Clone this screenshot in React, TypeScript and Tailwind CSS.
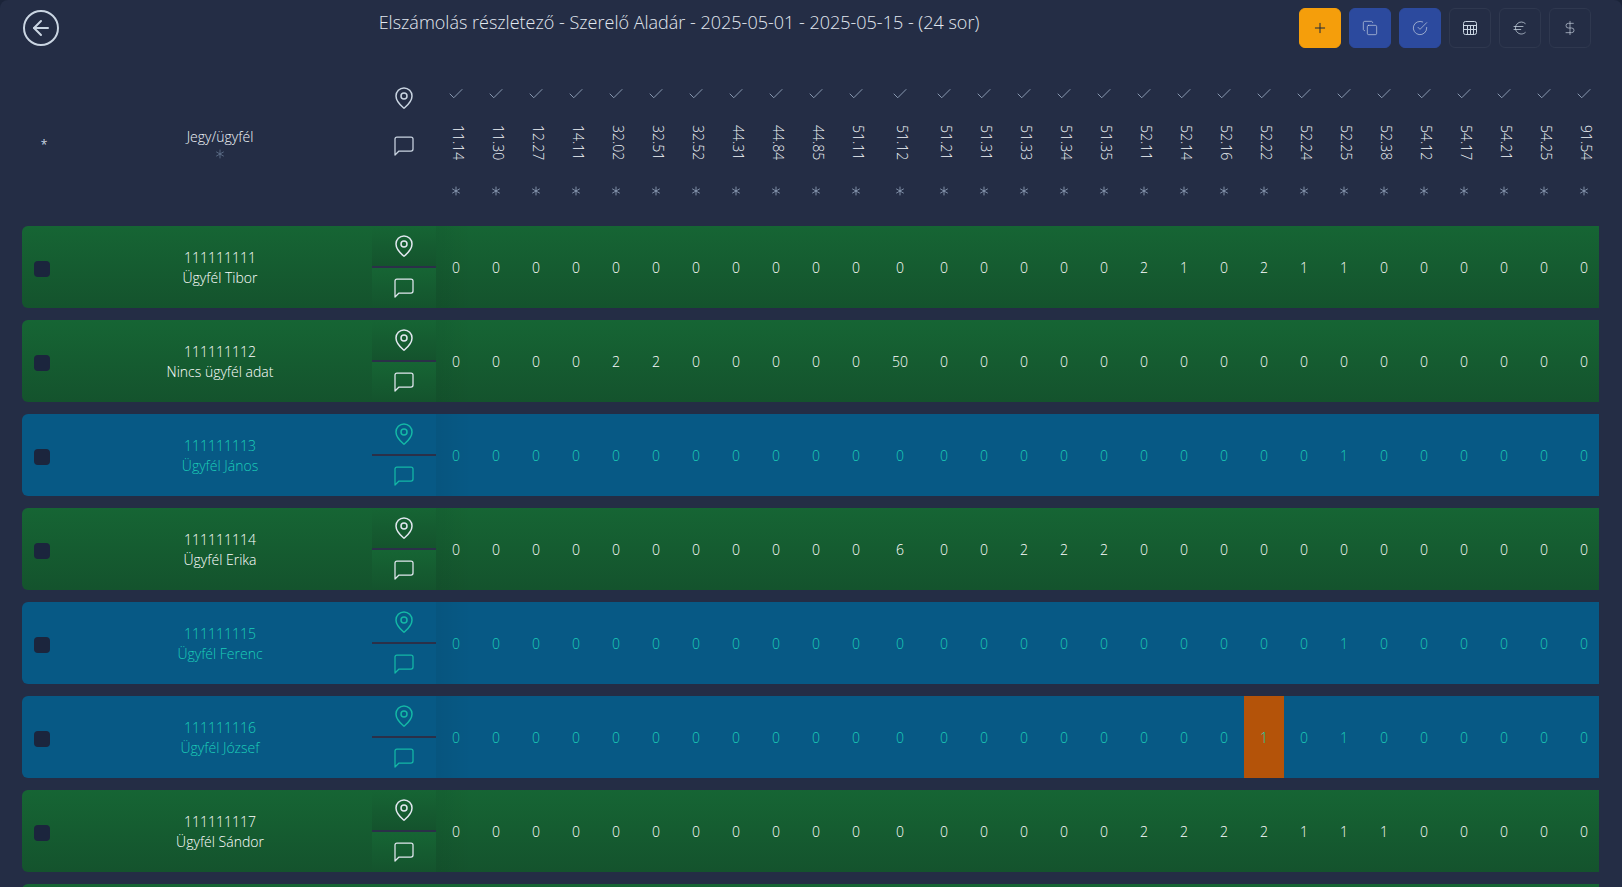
import { ArrowLeft, Asterisk, Check, Copy, DollarSign, Euro, MapPin, Plus } from "lucide-react";
import clsx from "clsx";
import type { ReactNode } from "react";

type Row = {
  ticket: string;
  client: string;
  tone: "green" | "blue";
  values: Record<string, number>;
  marked?: string;
};

const CODES = [
  "11.14", "11.30", "12.27", "14.11", "32.02", "32.51", "32.52", "44.31", "44.84", "44.85",
  "51.11", "51.12", "51.21", "51.31", "51.33", "51.34", "51.35", "52.11", "52.14", "52.16",
  "52.22", "52.24", "52.25", "52.38", "54.12", "54.17", "54.21", "54.25", "91.54",
];

const WIDE_CODE = "51.12";

const ROWS: Row[] = [
  {
    ticket: "111111111",
    client: "Ügyfél Tibor",
    tone: "green",
    values: { "52.11": 2, "52.14": 1, "52.22": 2, "52.24": 1, "52.25": 1 },
  },
  {
    ticket: "111111112",
    client: "Nincs ügyfél adat",
    tone: "green",
    values: { "32.02": 2, "32.51": 2, "51.12": 50 },
  },
  { ticket: "111111113", client: "Ügyfél János", tone: "blue", values: { "52.25": 1 } },
  {
    ticket: "111111114",
    client: "Ügyfél Erika",
    tone: "green",
    values: { "51.12": 6, "51.33": 2, "51.34": 2, "51.35": 2 },
  },
  { ticket: "111111115", client: "Ügyfél Ferenc", tone: "blue", values: { "52.25": 1 } },
  {
    ticket: "111111116",
    client: "Ügyfél József",
    tone: "blue",
    values: { "52.22": 1, "52.25": 1 },
    marked: "52.22",
  },
  {
    ticket: "111111117",
    client: "Ügyfél Sándor",
    tone: "green",
    values: { "52.11": 2, "52.14": 2, "52.16": 2, "52.22": 2, "52.24": 1, "52.25": 1, "52.38": 1 },
  },
];

const TONES = {
  green: "bg-linear-to-b/srgb from-[#166534] to-[#14532d]",
  blue: "bg-[#075985]",
};

const App = () => {
  return (
    <div className="h-screen overflow-hidden bg-[#1b2439] font-['Open_Sans','Noto_Sans',sans-serif] text-sm font-light text-slate-300">
      <main className="h-full overflow-hidden rounded-t-lg bg-[#242d45]">
        <Header />
        <div className="ml-[22px] mr-[23px] overflow-hidden">
          <table className="w-full min-w-[1582px] table-fixed border-separate border-spacing-x-0 border-spacing-y-3">
            <colgroup>
              <col className="w-[46px]" />
              <col />
              <col className="w-16" />
              {CODES.map((code) => (
                <col key={code} className={code === WIDE_CODE ? "w-12" : "w-10"} />
              ))}
            </colgroup>
            <TableHead />
            <tbody>
              {ROWS.map((row) => (
                <TableRow key={row.ticket} row={row} />
              ))}
              <tr className="h-[82px]">
                <td colSpan={CODES.length + 3} className={clsx("rounded-l-md", TONES.green)} />
              </tr>
            </tbody>
          </table>
        </div>
      </main>
    </div>
  );
};

const Header = () => {
  return (
    <header className="flex h-14 items-start justify-between pl-[23px] pr-[31px] pt-2">
      <button
        type="button"
        aria-label="Vissza"
        className="mt-0.5 flex size-9 items-center justify-center rounded-full border-2 border-slate-300"
      >
        <ArrowLeft size={24} strokeWidth={2} />
      </button>
      <h1 className="text-lg leading-7 font-light text-slate-200">
        Elszámolás részletező - Szerelő Aladár - 2025-05-01 - 2025-05-15 - (24 sor)
      </h1>
      <div className="flex gap-2">
        <ToolButton label="Új sor" className="border-[#f59e0b] bg-[#f59e0b] text-slate-800">
          <Plus size={16} strokeWidth={1.5} />
        </ToolButton>
        <ToolButton label="Másolás" className="border-[#2c4a9e] bg-[#2c4a9e]">
          <Copy size={16} strokeWidth={1} />
        </ToolButton>
        <ToolButton label="Jóváhagyás" className="border-[#2c4a9e] bg-[#2c4a9e]">
          <CheckCircleIcon />
        </ToolButton>
        <ToolButton label="Táblázat" className="border-[#2f384f]">
          <SheetIcon />
        </ToolButton>
        <ToolButton label="Euró" className="border-[#2f384f]">
          <Euro size={18} strokeWidth={1} />
        </ToolButton>
        <ToolButton label="Dollár" className="border-[#2f384f]">
          <DollarSign size={16} strokeWidth={1} />
        </ToolButton>
      </div>
    </header>
  );
};

const ToolButton = ({
  label,
  className,
  children,
}: {
  label: string;
  className: string;
  children: ReactNode;
}) => {
  return (
    <button
      type="button"
      aria-label={label}
      className={clsx("flex h-10 w-[42px] items-center justify-center rounded-md border", className)}
    >
      {children}
    </button>
  );
};

const TableHead = () => {
  return (
    <thead>
      <tr className="h-[146px]">
        <th className="pt-2 pr-0.5 text-xs font-normal">*</th>
        <th className="pt-2 font-light text-slate-100">
          <div className="flex flex-col items-center">
            <span className="leading-4">Jegy/ügyfél</span>
            <Asterisk size={16} strokeWidth={1.25} className="mt-px text-slate-500" />
          </div>
        </th>
        <th>
          <div className="flex flex-col items-center gap-6 pb-[38px]">
            <MapPin size={24} strokeWidth={1.5} />
            <MessageIcon />
          </div>
        </th>
        {CODES.map((code) => (
          <th key={code} className="pt-px font-light text-slate-100">
            <div className="flex flex-col items-center">
              <Check size={18} strokeWidth={1.25} className="text-slate-400" />
              <span className="mt-4 h-12 pl-1 leading-5 [writing-mode:vertical-rl]">{code}</span>
              <Asterisk size={16} strokeWidth={1.25} className="mt-4 text-slate-400" />
            </div>
          </th>
        ))}
      </tr>
    </thead>
  );
};

const TableRow = ({ row }: { row: Row }) => {
  const tone = TONES[row.tone];

  return (
    <tr className={clsx("h-[82px] text-center", row.tone === "blue" ? "text-[#1ccdb8]" : "text-white")}>
      <td className={clsx("rounded-l-md pl-3", tone)}>
        <input
          type="checkbox"
          aria-label={row.ticket}
          className="mt-1 block size-4 appearance-none rounded-sm bg-[#1b253d] checked:bg-blue-600"
        />
      </td>
      <td className={clsx("pt-0.5 leading-5", tone)}>
        <div>{row.ticket}</div>
        <div>{row.client}</div>
      </td>
      <td className={clsx("relative p-0", row.tone === "blue" ? "text-[#14b8a6]" : "text-slate-200")}>
        <div className={clsx("flex h-10 items-center justify-center", tone)}>
          <MapPin size={24} strokeWidth={1.5} />
        </div>
        <div className="h-0.5 bg-[#2b3049]" />
        <div className={clsx("flex h-10 items-center justify-center", tone)}>
          <MessageIcon />
        </div>
        <span className="pointer-events-none absolute inset-y-0 left-full w-9 bg-linear-to-r from-black/5 to-transparent" />
      </td>
      {CODES.map((code) => (
        <td key={code} className={clsx("pt-0.5", row.marked === code ? "bg-[#b45309]" : tone)}>
          {row.values[code] ?? 0}
        </td>
      ))}
    </tr>
  );
};

const MessageIcon = () => (
  <svg width="24" height="24" viewBox="0 0 24 24" fill="none" stroke="currentColor" strokeWidth="1.25" strokeLinecap="round" strokeLinejoin="round">
    <path d="M21 15a2 2 0 0 1-2 2H7l-4 4V5a2 2 0 0 1 2-2h14a2 2 0 0 1 2 2z" />
  </svg>
);

const CheckCircleIcon = () => (
  <svg width="16" height="16" viewBox="0 0 24 24" fill="none" stroke="currentColor" strokeLinecap="round" strokeLinejoin="round">
    <path d="M22 11.08V12a10 10 0 1 1-5.93-9.14" />
    <path d="M22 4 12 14.01l-3-3" />
  </svg>
);

const SheetIcon = () => (
  <svg width="14" height="14" viewBox="0 0 14 14" fill="none" stroke="currentColor">
    <rect x="0.5" y="0.5" width="13" height="13" rx="2" />
    <path d="M0.5 4.5h13M0.5 8.5h13M4.5 4.5v9M7.5 4.5v9M10.5 4.5v9" />
  </svg>
);

export default App;
